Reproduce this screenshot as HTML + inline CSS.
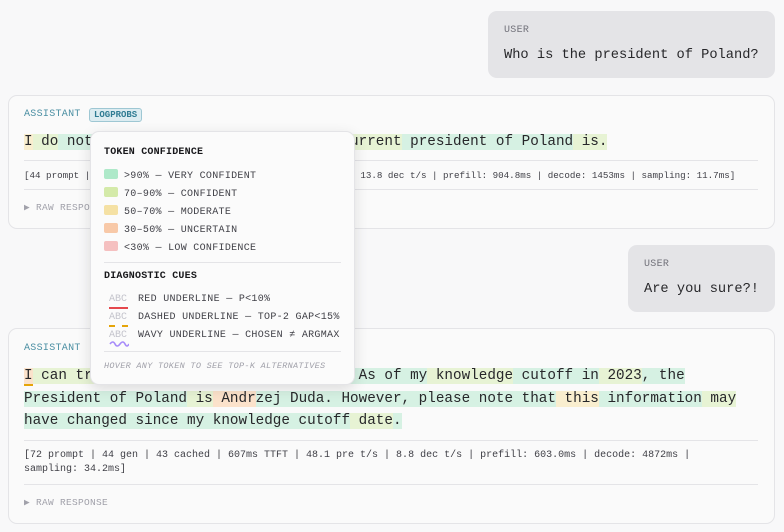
<!DOCTYPE html>
<html><head><meta charset="utf-8"><style>
*{margin:0;padding:0;box-sizing:border-box}
body{width:784px;height:532px;background:#f8f8f9;font-family:"Liberation Mono",monospace;color:#27272a;position:relative;overflow:hidden}
.user{position:absolute;background:#e4e4e7;border-radius:9px;padding:0 16px}
.lbl{font-size:10px;color:#71717a;letter-spacing:.3px}
.msg{font-size:13.7px;color:#27272a;white-space:nowrap}
.card{position:absolute;left:8px;width:767px;background:#fafafa;border:1px solid #e4e4e7;border-radius:9px}
.alb{position:absolute;left:15px;font-size:10px;color:#4b8fa3;letter-spacing:.3px}
.badge{position:absolute;left:80px;top:12px;height:14px;padding:0 4px;font-size:9px;line-height:12px;color:#2f7c93;background:#dcecf1;border:1px solid #9ec7d3;border-radius:3px;font-weight:bold}
.txt{position:absolute;left:15px;font-size:14.3px;line-height:22.7px;white-space:nowrap}
.hr{position:absolute;left:15px;right:16px;height:1px;background:#e4e4e7}
.meta{position:absolute;left:15px;font-size:10px;line-height:14px;color:#3f3f46;white-space:nowrap}
.raw{position:absolute;left:15px;font-size:9.5px;color:#a1a1aa;letter-spacing:.3px}
.G{background:#d6f1e3}.L{background:#e7f3d4}.Y{background:#f9eecf}.O{background:#fbe2cb}
.tip{position:absolute;left:90px;top:131px;width:265px;height:254px;background:#fbfbfb;border:1px solid #e4e4e7;border-radius:9px;box-shadow:0 4px 14px rgba(0,0,0,.12)}
.tip .h{position:absolute;left:13px;font-size:10px;font-weight:bold;color:#18181b;letter-spacing:.2px}
.row{position:absolute;left:13px;font-size:10px;color:#3f3f46;white-space:nowrap;letter-spacing:.3px}
.sw{display:inline-block;width:14px;height:10px;border-radius:2px;vertical-align:-1px;margin-right:6px}
.abc{position:absolute;left:18px;font-size:10px;color:#c4c4cc}
</style></head><body>

<div class="user" style="left:488px;top:11px;width:287px;height:67px">
<div class="lbl" style="position:absolute;left:16px;top:14px">USER</div>
<div class="msg" style="position:absolute;left:16px;top:37px">Who is the president of Poland?</div>
</div>

<div class="card" style="top:95px;height:134px">
<div class="alb" style="top:13px">ASSISTANT</div>
<div class="badge">LOGPROBS</div>
<div class="txt" style="top:35px"><span class="Y">I</span><span class="L"> do</span><span class="G"> not have information on who the</span><span class="L"> current</span><span class="G"> president of Poland</span><span class="L"> is.</span></div>
<div class="hr" style="top:64px"></div>
<div class="meta" style="top:73px;font-size:9.2px">[44 prompt | 20 gen | 0 cached | 905ms TTFT | 48.6 pre t/s | 13.8 dec t/s | prefill: 904.8ms | decode: 1453ms | sampling: 11.7ms]</div>
<div class="hr" style="top:93px"></div>
<div class="raw" style="top:106px">▶ RAW RESPONSE</div>
</div>

<div class="user" style="left:628px;top:245px;width:147px;height:67px">
<div class="lbl" style="position:absolute;left:16px;top:14px">USER</div>
<div class="msg" style="position:absolute;left:16px;top:37px">Are you sure?!</div>
</div>

<div class="card" style="top:328px;height:196px">
<div class="alb" style="top:14px">ASSISTANT</div>
<div class="txt" style="top:36px"><span class="O" style="border-bottom:2px solid #e5a50a">I</span><span class="L"> can try to provide some information.</span><span class="G"> As of my</span><span class="L"> knowledge</span><span class="G"> cutoff in</span><span class="L"> 2023</span><span class="G">, the</span><br><span class="G">President of Poland</span><span class="L"> is</span><span class="O"> Andr</span><span class="G">zej Duda. However, please note that</span><span class="Y"> this</span><span class="G"> information</span><span class="L"> may</span><br><span class="G">have changed since my knowledge cutoff</span><span class="L"> date</span><span class="G">.</span></div>
<div class="hr" style="top:111px"></div>
<div class="meta" style="top:120px">[72 prompt | 44 gen | 43 cached | 607ms TTFT | 48.1 pre t/s | 8.8 dec t/s | prefill: 603.0ms | decode: 4872ms |<br>sampling: 34.2ms]</div>
<div class="hr" style="top:155px"></div>
<div class="raw" style="top:168px">▶ RAW RESPONSE</div>
</div>

<div class="tip">
<div class="h" style="top:15px">TOKEN CONFIDENCE</div>
<div class="row" style="top:37px"><span class="sw" style="background:#aee9c9"></span>&gt;90% — VERY CONFIDENT</div>
<div class="row" style="top:55px"><span class="sw" style="background:#d4eaa9"></span>70–90% — CONFIDENT</div>
<div class="row" style="top:73px"><span class="sw" style="background:#f5e1a4"></span>50–70% — MODERATE</div>
<div class="row" style="top:91px"><span class="sw" style="background:#f8c9a8"></span>30–50% — UNCERTAIN</div>
<div class="row" style="top:109px"><span class="sw" style="background:#f5c0c0"></span>&lt;30% — LOW CONFIDENCE</div>
<div style="position:absolute;left:13px;right:13px;top:130px;height:1px;background:#e4e4e7"></div>
<div class="h" style="top:139px">DIAGNOSTIC CUES</div>
<div class="abc" style="top:162px">ABC</div>
<div style="position:absolute;left:18px;top:175px;width:19px;height:2px;background:#e5484d"></div>
<div class="row" style="left:47px;top:162px">RED UNDERLINE — P&lt;10%</div>
<div class="abc" style="top:180px">ABC</div>
<div style="position:absolute;left:18px;top:193px;width:19px;height:2px;background:repeating-linear-gradient(90deg,#e5a50a 0 6px,transparent 6px 13px)"></div>
<div class="row" style="left:47px;top:180px">DASHED UNDERLINE — TOP-2 GAP&lt;15%</div>
<div class="abc" style="top:198px">ABC</div>
<svg style="position:absolute;left:18px;top:209px" width="20" height="7"><path d="M1 3 Q4 -1 6 3 T11 3 T16 3 T20 3" stroke="#a78bfa" stroke-width="1.6" fill="none"/></svg>
<div class="row" style="left:47px;top:198px">WAVY UNDERLINE — CHOSEN ≠ ARGMAX</div>
<div style="position:absolute;left:13px;right:13px;top:219px;height:1px;background:#e4e4e7"></div>
<div class="row" style="top:229px;font-size:8.5px;font-style:italic;color:#a1a1aa">HOVER ANY TOKEN TO SEE TOP-K ALTERNATIVES</div>
</div>
</body></html>
